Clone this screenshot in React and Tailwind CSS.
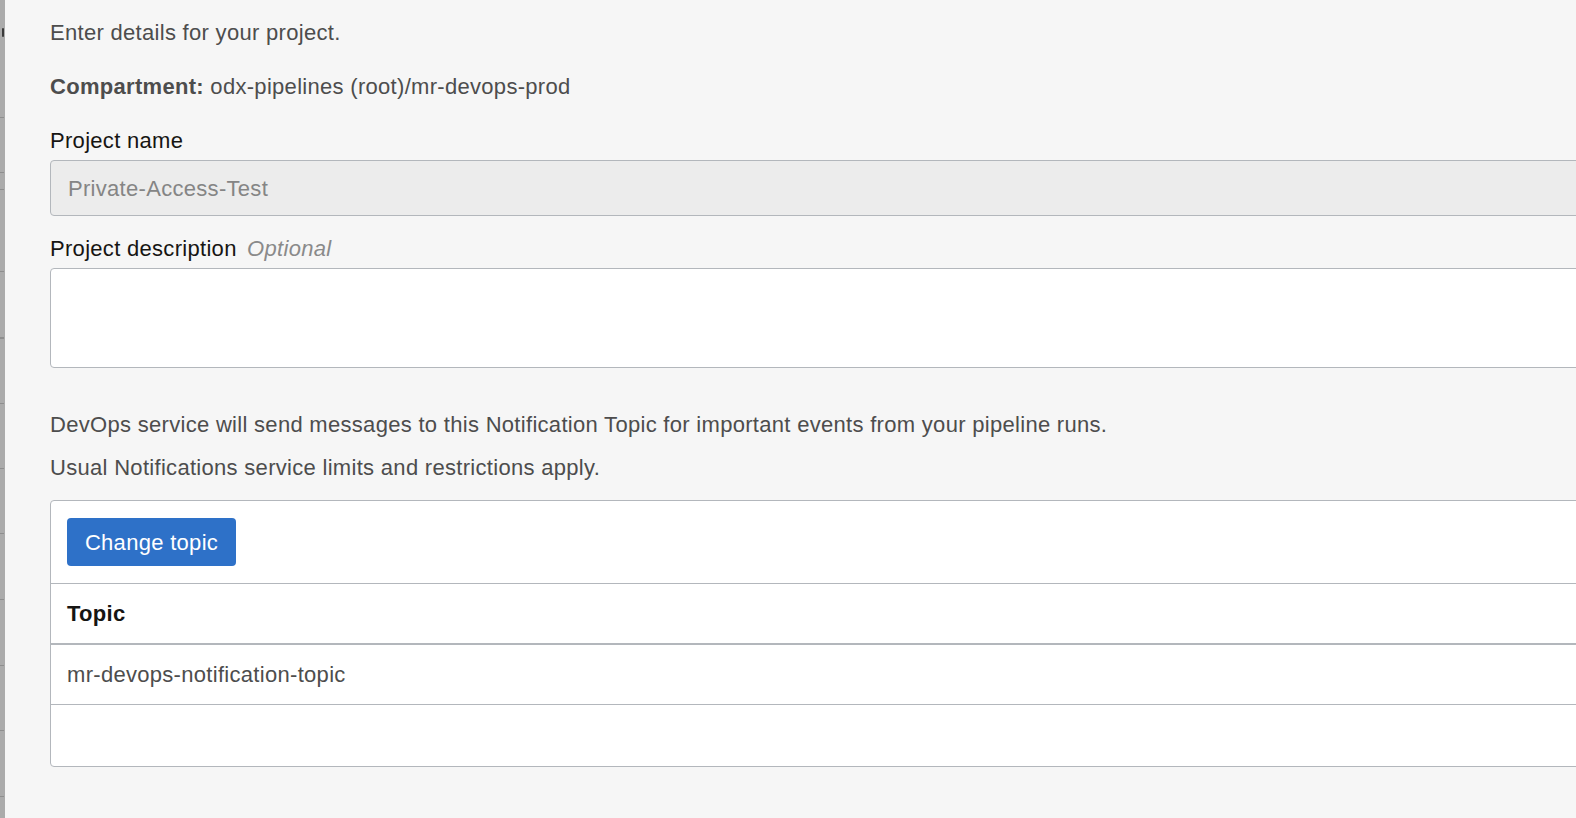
import React from "react";

function LeftStrip() {
  const marks = [117, 172, 189, 271, 337, 403, 468, 533, 599, 665, 730, 796];
  const items = [];
  let prev = 0;
  marks.forEach((y, i) => {
    items.push(<div key={"s" + i} style={{ height: y - prev }} className="shrink-0" />);
    items.push(<div key={"m" + i} className={i === 4 ? "h-[2px] w-[4px] bg-[#8e8e8e] shrink-0" : "h-px w-[4px] bg-[#8e8e8e] shrink-0"} />);
    prev = y + (i === 4 ? 2 : 1);
  });
  return (
    <div className="w-[5px] shrink-0 bg-[#ababab] flex flex-col relative">
      <div className="absolute left-[2px] top-[28px] w-[2px] h-[9px] rounded-full bg-[#3a3a3a]" />
      {items}
    </div>
  );
}

export default function App() {
  return (
    <div
      className="w-[1576px] h-[818px] overflow-hidden flex bg-[#f6f6f6]"
      style={{ fontFamily: '"Liberation Sans", Arial, sans-serif' }}
    >
      <LeftStrip />
      <div className="flex-1 min-w-0 pl-[45px] pt-[21px] text-[22px] tracking-[0.3px] text-[#4d4d4d]">
        <p className="leading-[24px]">Enter details for your project.</p>
        <p className="leading-[24px] mt-[30px]">
          <span className="font-bold">Compartment:</span> odx-pipelines (root)/mr-devops-prod
        </p>
        <div className="mt-[30px] leading-[24px] text-[#161513]">Project name</div>
        <div className="mt-[7px] w-[1600px] h-[56px] border border-[#b3b7bc] rounded-l-[4px] bg-[#ececec] flex items-center px-[17px] text-[#858585]">
          Private-Access-Test
        </div>
        <div className="mt-[21px] leading-[24px] text-[#161513]">
          Project description <span className="italic text-[#8a8a8a] ml-[4px]">Optional</span>
        </div>
        <div className="mt-[7px] w-[1600px] h-[100px] border border-[#b3b7bc] rounded-l-[4px] bg-white" />
        <p className="mt-[45px] leading-[24px]">
          DevOps service will send messages to this Notification Topic for important events from your pipeline runs.
        </p>
        <p className="mt-[19px] leading-[24px]">Usual Notifications service limits and restrictions apply.</p>
        <div className="mt-[20px] w-[1600px] border border-[#b3b7bc] rounded-l-[4px] bg-white">
          <div className="h-[83px] flex items-center px-[16px] border-b border-[#b3b7bc]">
            <button className="h-[48px] w-[169px] rounded-[4px] bg-[#2e71c8] text-white text-[22px] tracking-[0.3px] flex items-center justify-center">
              Change topic
            </button>
          </div>
          <div className="h-[61px] flex items-center px-[16px] border-b-2 border-[#b3b7bc] font-bold text-[#161513]">
            Topic
          </div>
          <div className="h-[60px] flex items-center px-[16px] border-b border-[#b3b7bc] text-[#4d4d4d]">
            mr-devops-notification-topic
          </div>
          <div className="h-[61px]" />
        </div>
      </div>
    </div>
  );
}
